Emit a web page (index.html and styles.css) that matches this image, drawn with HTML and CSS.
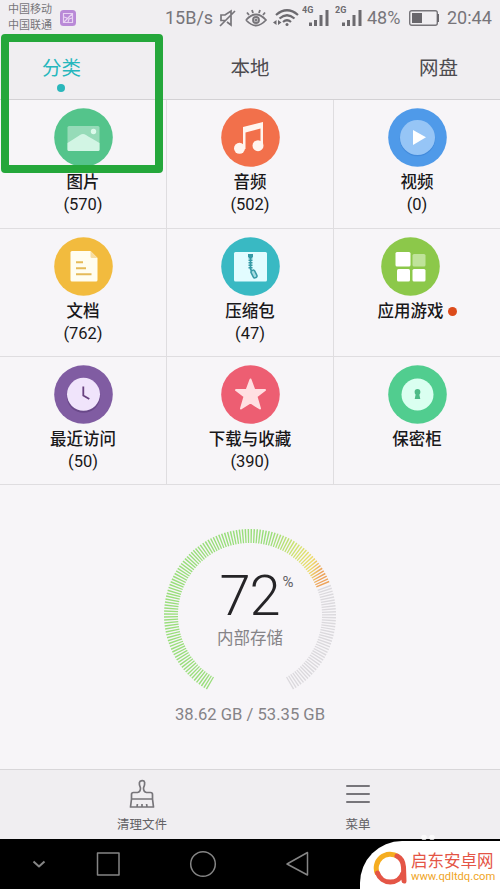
FILE: index.html
```html
<!DOCTYPE html>
<html lang="zh-CN">
<head>
<meta charset="utf-8">
<title>文件管理</title>
<link rel="stylesheet" href="styles.css">
</head>
<body>
<div class="screen">
  <header class="header">
    <div class="status">
      <div class="carriers"><span>中国移动</span><span>中国联通</span></div>
      <svg class="thumb" width="16" height="16" viewBox="0 0 16 16"><rect width="16" height="16" rx="3.500" fill="#b989d7"/><path d="M3.500 3.500h9v9h-9zM4 12l8-8M4 7l3 1M8 12l1-3 3-1" fill="none" stroke="#e8d3f2" stroke-width="1.200"/></svg>
      <span class="speed">15B/s</span>
      <svg class="mute" width="17" height="18" viewBox="0 0 17 18" fill="none" stroke="#77757a" stroke-width="1.700"><path d="M6 11.500H2V6h4l6-4v14L8 13M1 17L16 2"/></svg>
      <svg class="eye" width="22" height="18" viewBox="0 0 22 18" fill="none" stroke="#77757a" stroke-width="1.800"><path d="M1 11q10-11 20 0q-10 11-20 0M4 6L2 3.500M8 4L7 1M14 4l1-3M18 6l2-2.500"/><circle cx="11" cy="11" r="3"/><circle cx="11" cy="11" r=".7"/></svg>
      <svg class="wifi" width="26" height="19" viewBox="0 0 26 19" fill="none" stroke="#6c6a6f" stroke-width="2.200"><path d="M3 7q11-9.500 22 0M6.500 10.500q7.500-6.500 15 0M10 14q4-3.500 8 0"/><circle cx="14" cy="16.500" r="1.500" fill="#6c6a6f" stroke="none"/><path d="M3.500 12v5L0 14.500zM5 12v5l3.500-2.500z" fill="#6c6a6f" stroke="none"/></svg>
      <svg class="sig1" width="28" height="22" viewBox="0 0 28 22" fill="#6c6a6f"><text class="net" x="0" y="8">4G</text><path d="M7 17.500h3V21H7zM12 15h3v6h-3zM17.500 10h3v11h-3zM23.500 5h3v16h-3z"/></svg>
      <svg class="sig2" width="28" height="22" viewBox="0 0 28 22" fill="#6c6a6f"><text class="net" x="0" y="8">2G</text><path d="M7 17.500h3V21H7zM12 15h3v6h-3zM17.500 10h3v11h-3zM23.500 5h3v16h-3z"/></svg>
      <span class="pct">48%</span>
      <svg class="battery" width="31" height="16" viewBox="0 0 31 16"><rect x=".7" y=".7" width="27.600" height="14.600" rx="2" fill="none" stroke="#77757a" stroke-width="1.400"/><path d="M3 3h10v10H3zM28 4h2v8h-2z" fill="#69676c"/></svg>
      <span class="clock">20:44</span>
    </div>
    <nav class="tabs"><span class="tab active">分类</span><span class="tab">本地</span><span class="tab">网盘</span></nav>
  </header>

  <main class="grid">
    <section class="cell">
      <svg class="icon" viewBox="0 0 59 59"><circle cx="29.500" cy="29.500" r="29.300" fill="#54c48b"/><rect x="13.500" y="18" width="32" height="25" rx="1.500" fill="#96dbb8"/><path d="M13.500 35Q23 29 26 27q3-2 6 0 5 3 13.500 8v6.500q0 1.500-1.500 1.500H15q-1.500 0-1.500-1.500z" fill="#d2f5e4"/><circle cx="39.500" cy="23.500" r="2.700" fill="#dcfaeb"/></svg>
      <span>图片</span><span class="count">(570)</span>
    </section>
    <section class="cell">
      <svg class="icon" viewBox="0 0 59 59"><circle cx="29.500" cy="29.500" r="29.300" fill="#f2704b"/><path d="M22 19l20-5V38h-2.500V20.500L24.500 24.500V41H22z" fill="#fff5ef"/><circle cx="18.500" cy="40.300" r="5.500" fill="#fff5ef"/><circle cx="37" cy="37.700" r="5.500" fill="#fff5ef"/></svg>
      <span>音频</span><span class="count">(502)</span>
    </section>
    <section class="cell">
      <svg class="icon" viewBox="0 0 59 59"><circle cx="29.500" cy="29.500" r="29.300" fill="#4f9ae9"/><circle cx="29.500" cy="30.500" r="17.800" fill="#438bdc"/><circle cx="29.500" cy="29.500" r="17.500" fill="#96c5f6"/><path d="M25 22l13 7.200L25 37z" fill="#fff"/></svg>
      <span>视频</span><span class="count">(0)</span>
    </section>
    <section class="cell">
      <svg class="icon" viewBox="0 0 59 59"><circle cx="29.500" cy="29.500" r="29.300" fill="#f2bb3e"/><path d="M18 14h18.500l7 7v22q0 1.500-1.500 1.500H18q-1.500 0-1.500-1.500V15.500Q16.500 14 18 14z" fill="#fffdf0"/><path d="M36.500 14l7 7h-5.500q-1.500 0-1.500-1.500z" fill="#f8dda0"/><path d="M22 25.200h7M22 31.200h10M22 37.200h15.500" stroke="#e5ba58" stroke-width="2"/></svg>
      <span>文档</span><span class="count">(762)</span>
    </section>
    <section class="cell">
      <svg class="icon" viewBox="0 0 59 59"><circle cx="29.500" cy="29.500" r="29.300" fill="#39b9c3"/><rect x="13" y="15" width="33" height="29.500" rx="1.500" fill="#e2fcff"/><path d="M27 17h5v3h-5z" fill="#369aa6"/><path d="M29.500 20v12" stroke="#369aa6" stroke-width="4" stroke-dasharray="1.500 1"/><path d="M29.500 20v12l3 5" stroke="#369aa6" stroke-width="1.700" fill="none"/><rect x="31" y="33" width="4" height="8" rx="1.800" transform="rotate(-27 33 37)" fill="#a5dce1" stroke="#369aa6" stroke-width="1.500"/></svg>
      <span>压缩包</span><span class="count">(47)</span>
    </section>
    <section class="cell apps">
      <svg class="icon" viewBox="0 0 59 59"><circle cx="29.500" cy="29.500" r="29.300" fill="#8cc84a"/><g fill="#fff"><rect x="14.500" y="15" width="15" height="14.500" rx="1.500"/><rect x="16" y="32" width="13" height="12.500" rx="1.500"/><rect x="31.500" y="32" width="13" height="12.500" rx="1.500"/></g><rect x="31.500" y="17" width="13" height="12.500" rx="1.500" fill="#bfe39a"/></svg>
      <span class="with-dot">应用游戏</span>
    </section>
    <section class="cell">
      <svg class="icon" viewBox="0 0 59 59"><circle cx="29.500" cy="29.500" r="29.300" fill="#805ca2"/><circle cx="29.500" cy="31" r="16.800" fill="#694889"/><circle cx="29.500" cy="29.300" r="16.500" fill="#f0e4fb"/><path d="M29.300 21.500v9l6 3.500" fill="none" stroke="#68427f" stroke-width="1.800"/></svg>
      <span>最近访问</span><span class="count">(50)</span>
    </section>
    <section class="cell">
      <svg class="icon" viewBox="0 0 59 59"><circle cx="29.500" cy="29.500" r="29.300" fill="#ed5e72"/><path d="M29.500 14.500l3.700 10.200 10.800.3-8.500 6.500 3.500 12-9.500-6-9.500 6 3.500-12L15 25l10.800-.3z" fill="#ffdfe2" stroke="#ffdfe2" stroke-width="2" stroke-linejoin="round"/></svg>
      <span>下载与收藏</span><span class="count">(390)</span>
    </section>
    <section class="cell">
      <svg class="icon" viewBox="0 0 59 59"><circle cx="29.500" cy="29.500" r="29.300" fill="#51cd8f"/><circle cx="29.500" cy="29.500" r="16" fill="#dafff0"/><circle cx="29.500" cy="27" r="2.900" fill="#4dbb87"/><path d="M28.200 27h2.600l1.500 7h-5.600z" fill="#4dbb87"/></svg>
      <span>保密柜</span>
    </section>
  </main>

  <section class="storage">
    <div class="gauge">
      <svg class="ring" width="172" height="172" viewBox="0 0 172 172" fill="none" stroke-width="14">
        <defs><linearGradient id="usage" gradientUnits="userSpaceOnUse" x1="108" y1="0" x2="165" y2="16"><stop offset="0" stop-color="#9ade7c"/><stop offset=".5" stop-color="#d3e370"/><stop offset=".8" stop-color="#eedb6c"/><stop offset="1" stop-color="#eda35b"/></linearGradient></defs>
        <path d="M46.500 154.400A79 79 0 1 1 159 55.800" pathLength="217" stroke="url(#usage)" stroke-dasharray="1 1"/>
        <path d="M160 58.300A79 79 0 0 1 125.500 154.400" pathLength="81" stroke="#dbd9dd" stroke-dasharray="1 1"/>
      </svg>
      <div class="reading"><div class="value">72<sup>%</sup></div><div class="caption">内部存储</div></div>
    </div>
    <div class="capacity">38.62 GB / 53.35 GB</div>
  </section>

  <footer class="actions">
    <div class="action clean"><svg width="26" height="30" viewBox="0 0 26 30" fill="none" stroke="#77757a" stroke-width="1.700" stroke-linejoin="round"><path d="M11.500 9Q8.500 2 13 1.700T14.500 9q0 4 3 4.500h4q2 0 2 2V20h-21v-4.500q0-2 2-2h4q3-.5 3-4.500zM2.500 20L1.500 28h23l-1-8M8 28l.4-3M13 28v-3M18 28l-.4-3"/></svg><span>清理文件</span></div>
    <div class="action menu"><svg width="26" height="30" viewBox="0 0 26 30" stroke="#77757a" stroke-width="2" stroke-linecap="round"><path d="M2 7h22M2 15h22M2 23h22"/></svg><span>菜单</span></div>
  </footer>
  <div class="navbar">
    <svg width="360" height="50" viewBox="0 0 360 50" fill="none" stroke="#858585" stroke-width="1.500" stroke-linejoin="round"><path d="M33.500 22.500l5.500 5 5.500-5" stroke-width="2"/><rect x="97.500" y="14" width="21.500" height="22"/><circle cx="203" cy="25" r="12.300"/><path d="M307.500 13.500v22.500l-20.500-11z"/></svg>
  </div>
  <div class="brand">
    <svg width="34" height="34" viewBox="0 0 34 34" fill="none" stroke-width="5"><path d="M4.500 23A14 14 0 0 1 25 5.500" stroke="#f5ad20"/><path d="M24 5Q30 8 30.500 16l.5 14M30 22A13.500 13.500 0 0 1 4.500 22" stroke="#e45546" stroke-linecap="round"/></svg>
    <div class="brand-text"><strong>启东安卓网</strong><span>www.qdltdq.com</span></div>
  </div>
  <svg class="paw" width="16" height="6" viewBox="0 0 16 6" fill="#fff"><circle cx="4" cy="3.500" r="2.800"/><circle cx="12" cy="3.500" r="2.800"/></svg>
  <div class="highlight"></div>
</div>
</body>
</html>
```
FILE: styles.css
```css
* { box-sizing: border-box; }
body { margin: 0; font-family: Roboto, "Noto Sans CJK SC", sans-serif; }
.screen { position: relative; width: 500px; height: 889px; background: #f7f5f8; overflow: hidden; display: flex; flex-direction: column; }
.header { height: 100px; background: #f0eef1; border-bottom: 1px solid #d3d1d4; }
.status { height: 35px; display: flex; align-items: center; color: #77757a; font-size: 18px; white-space: nowrap; }
.status svg { flex: none; }
.carriers { display: flex; flex-direction: column; width: 45px; margin-left: 8px; font-size: 11px; line-height: 16px; padding-top: 1px; }
.thumb { margin-left: 7px; }
.speed { width: 49px; margin-left: 89px; }
.mute { margin-left: 5px; }
.eye { margin-left: 9px; }
.wifi { margin-left: 6px; }
.sig1 { margin: -4px 0 0 3px; }
.sig2 { margin: -4px 0 0 5px; }
.net { font: 700 9px Roboto, sans-serif; }
.pct { width: 38px; margin-left: 4px; }
.battery { margin-left: 4px; }
.clock { margin-left: 7px; }
.tabs { display: flex; justify-content: space-between; padding: 0 42px; height: 64px; }
.tab { font-size: 19.5px; line-height: 67px; color: #4d4b4f; position: relative; }
.active { color: #26b7bd; }
.active::after { content: ""; position: absolute; left: 15px; top: 49px; width: 8px; height: 8px; border-radius: 50%; background: #2ab7bb; }
.grid { display: grid; grid-template-columns: 167px 167px 166px; grid-template-rows: 129px 128px 128px; }
.cell { display: flex; flex-direction: column; align-items: center; padding-top: 8px; border-right: 1px solid #dfdde0; border-bottom: 1px solid #dfdde0; color: #19181a; font-size: 16.5px; font-weight: 500; line-height: 23px; }
.cell:nth-child(3n) { border-right: 0; }
.icon { width: 59px; height: 59px; margin-bottom: 4px; flex: none; }
.count { font-size: 16.5px; font-weight: 400; line-height: 21px; }
.apps .icon { margin-right: 14px; }
.with-dot { display: flex; align-items: center; gap: 4px; }
.with-dot::after { content: ""; width: 9px; height: 9px; border-radius: 50%; background: #dc4b1b; }
.storage { flex: 1; display: flex; flex-direction: column; align-items: center; padding-top: 44px; }
.gauge { display: grid; width: 172px; height: 172px; }
.ring, .reading { grid-area: 1 / 1; }
.reading { text-align: center; padding-top: 39px; }
.value { display: flex; justify-content: center; font-size: 56px; font-weight: 300; line-height: 57px; color: #252427; letter-spacing: -1px; padding-left: 12px; }
.value sup { font-size: 15px; font-weight: 400; line-height: 15px; margin-top: 7px; margin-left: 3px; color: #626064; }
.caption { color: #858387; font-size: 16.5px; line-height: 24px; margin-top: 2px; }
.capacity { margin-top: 4px; color: #858387; font-size: 16.6px; line-height: 20px; }
.actions { height: 70px; flex: none; display: flex; background: #f0eef1; border-top: 1px solid #d8d6d9; color: #636165; font-size: 12.5px; line-height: 20px; }
.action { display: flex; flex-direction: column; align-items: center; padding-top: 9px; gap: 6px; }
.clean { width: 284px; }
.menu { width: 148px; }
.navbar { height: 50px; flex: none; background: #000; }
.brand { position: absolute; right: 0; bottom: 0; width: 140px; height: 48px; background: #fff; border-radius: 42px 0 0 0; display: flex; align-items: center; padding: 5px 0 0 13px; gap: 4px; }
.brand svg { flex: none; }
.brand-text { display: flex; flex-direction: column; white-space: nowrap; }
.brand-text strong { color: #e45546; font-size: 16.5px; font-weight: 400; line-height: 17px; }
.brand-text span { color: #efa51f; font-size: 11.2px; line-height: 13px; }
.paw { position: absolute; left: 420px; top: 834px; opacity: .75; }
.highlight { position: absolute; left: 1px; top: 34px; width: 162px; height: 139px; border: 8px solid #25a73b; border-radius: 4px; }
```
